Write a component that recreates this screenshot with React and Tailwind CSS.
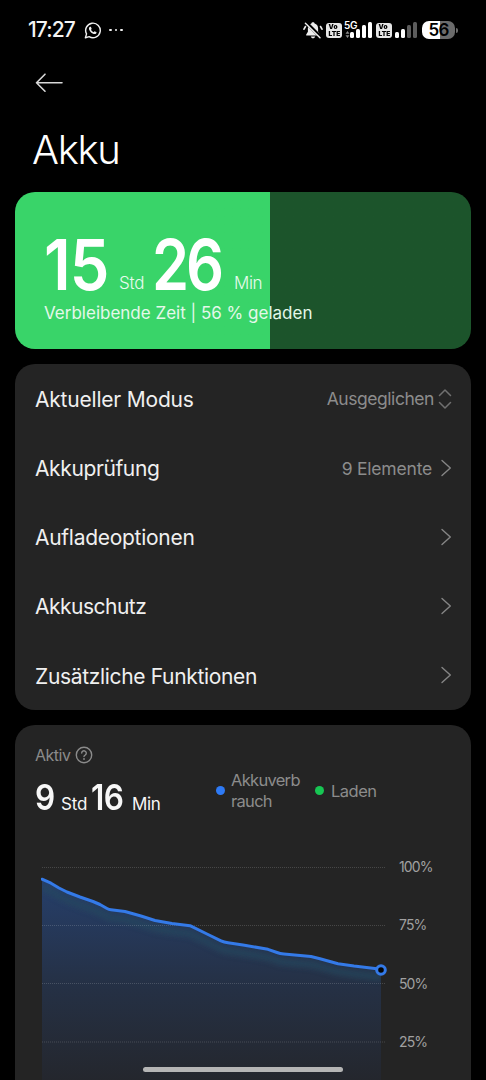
const menuItems = [
    { label: "Aktueller Modus", value: "Ausgeglichen", type: "select", spacing: "tracking-[-0.2px]" },
    { label: "Akkuprüfung", value: "9 Elemente", spacing: "tracking-[-0.38px]" },
    { label: "Aufladeoptionen", spacing: "tracking-[-0.28px]" },
    { label: "Akkuschutz", spacing: "tracking-[-0.5px]" },
    { label: "Zusätzliche Funktionen", spacing: "tracking-[-0.33px]" },
];

const gridLevels = ["100%", "75%", "50%", "25%"];

// Battery level curve, origin is the top left corner of the plot
const curve =
    "M1 19.2 L10 23.2 L18 28 L26 32 L39 37 L52 41.500 L59 44.500 L66 48.500 Q68 49.600 70 49.800 L84 51.500 L100 56 L114 60.500 L131 63.500 L149 65.700 L166 74 L180 80.800 Q183 82.200 187 82.700 L202 85 L227 89.300 L236 92.500 Q239 93.800 243 94 L270 96.500 L279 98.700 L297 103.700 L313 106 L336 108.700 L340 110";

function BellOffIcon() {
    return (
        <svg width="20" height="19" viewBox="0 0 20 19" fill="none">
            <path d="M10 1.200c.9 0 1.500.5 1.600 1.300 2.300.7 3.500 2.500 3.500 5v3.300l1.700 2.600v1H3.200v-1l1.700-2.600V7.500c0-2.500 1.200-4.300 3.500-5 .1-.8.700-1.300 1.600-1.300Z" fill="#ececec" />
            <path d="M7.800 15.400h4.400c-.3 1.200-1.100 1.800-2.200 1.800s-1.900-.6-2.200-1.800Z" fill="#ececec" />
            <path d="M2.400 5.600 1 8.200M17.600 5.600 19 8.200" stroke="#ececec" strokeWidth="1.700" strokeLinecap="round" />
            <path d="m3.300 1.700 14.500 14.500" stroke="#000" strokeWidth="3.400" />
            <path d="m2.400 2.200 14.600 14.600" stroke="#ececec" strokeWidth="1.500" strokeLinecap="round" />
        </svg>
    );
}

function WhatsAppIcon() {
    return (
        <svg width="17" height="17" viewBox="0 0 24 24" fill="none" stroke="#f0f0f0">
            <path d="M2 22.200 3.600 16.800A10.300 10.300 0 1 1 7.300 20.700Z" strokeWidth="2" strokeLinejoin="round" />
            <path d="M8.600 6.600c-.4 0-1.600 1-1.600 2.500 0 3.300 4.200 7.900 8.200 7.900 1.500 0 2.500-1.100 2.500-2.200 0-.5-2.500-1.700-2.900-1.600-.5.100-.9 1.200-1.400 1.200-.9-.2-3.200-2.300-3.400-3.300 0-.4.8-.9.800-1.500-.2-.7-.9-2.500-1.300-2.900Z" fill="#f0f0f0" stroke="none" />
        </svg>
    );
}

function VolteBadge() {
    return (
        <div className="flex h-[15px] w-4 flex-col items-center justify-center rounded-[3px] bg-[#e6e6e6] text-[6px] leading-[7px] font-black text-black">
            <span className="-ml-0.5 scale-x-110">Vo</span>
            <span className="scale-x-110">LTE</span>
        </div>
    );
}

function SignalBars({ active }) {
    const heights = ["h-[6px]", "h-[9px]", "h-[13px]", "h-[16px]"];
    return (
        <div className="flex items-end gap-[2px]">
            {heights.map((height, i) => (
                <div key={height} className={`w-1 rounded-[1.5px] ${height} ${i < active ? "bg-white" : "bg-[#5c5c5c]"}`} />
            ))}
        </div>
    );
}

function StatusBar() {
    return (
        <div className="flex h-[60px] items-center pr-[28px] pl-[28px]">
            <span className="w-[56px] text-[21px] font-medium tracking-[-0.9px] text-[#f4f4f4]">17:27</span>
            <WhatsAppIcon />
            <div className="ml-[8px] flex gap-[3px]">
                <i className="size-[2.500px] rounded-full bg-[#f0f0f0]" />
                <i className="size-[2.500px] rounded-full bg-[#f0f0f0]" />
                <i className="size-[2.500px] rounded-full bg-[#f0f0f0]" />
            </div>
            <div className="ml-auto flex items-center">
                <BellOffIcon />
                <div className="ml-[3px]"><VolteBadge /></div>
                <div className="relative ml-[5px] pl-[3px]">
                    <SignalBars active={4} />
                    <span className="absolute -top-px left-[-3px] bg-black text-[10px] leading-[8px] font-semibold tracking-[-0.3px] text-white">5G</span>
                    <svg className="absolute bottom-0 left-[-2px]" width="5" height="7" viewBox="0 0 5 7">
                        <path d="M2.500 0 4.500 2.700H.5ZM2.500 7 .5 4.300h4Z" fill="#8b8b8b" />
                    </svg>
                </div>
                <div className="ml-[4px]"><VolteBadge /></div>
                <div className="ml-[3px]"><SignalBars active={2} /></div>
                <div className="ml-[5px] flex h-[18px] w-[33px] items-center justify-center rounded-[7px] bg-linear-to-r from-white from-56% to-[#6b6b6b] to-56% text-[17px] leading-none font-semibold tracking-[-0.8px] text-black">
                    56
                </div>
                <div className="ml-px h-[5px] w-[2px] rounded-r-full bg-[#6b6b6b]" />
            </div>
        </div>
    );
}

function ChargeCard() {
    return (
        <div className="h-[157px] rounded-[20px] bg-linear-to-r from-[#39d469] from-56% to-[#1c542b] to-56% pl-[29px] text-white">
            <div className="flex h-[109px] items-end leading-[36px] whitespace-nowrap">
                <span className="w-[75px] origin-left scale-x-90 text-[70px] leading-[72px] font-semibold tracking-[-1px]">15</span>
                <span className="w-[33px] text-[17px] font-light tracking-[-0.2px] text-[#e8fbee]">Std</span>
                <span className="w-[82px] origin-left scale-x-85 text-[70px] leading-[72px] font-semibold tracking-[-3.500px]">26</span>
                <span className="text-[17px] font-light tracking-[-0.4px] text-[#e8fbee]">Min</span>
            </div>
            <div className="text-[17px] leading-[25px] whitespace-nowrap text-[#e4f8ea]">Verbleibende Zeit | 56 % geladen</div>
        </div>
    );
}

function Chevron() {
    return (
        <svg width="12" height="18" viewBox="0 0 12 18" fill="none">
            <path d="m2 1.500 8.300 7.500L2 16.500" stroke="#858585" strokeWidth="1.400" strokeLinecap="round" strokeLinejoin="round" />
        </svg>
    );
}

function SelectArrows() {
    return (
        <svg width="14" height="20" viewBox="0 0 14 20" fill="none">
            <path d="M1.500 6.500 7 1l5.500 5.500M1.500 13.500 7 19l5.500-5.500" stroke="#707070" strokeWidth="1.500" strokeLinecap="round" strokeLinejoin="round" />
        </svg>
    );
}

function MenuRow({ item }) {
    return (
        <div className="flex h-[69.200px] items-center pr-[19px] pl-5">
            <span className={`pt-[2px] text-[21px] text-[#f0f0f0] ${item.spacing}`}>{item.label}</span>
            <span className={`ml-auto pt-[2px] text-[17.500px] text-[#8c8c8c] ${item.type === "select" ? "mr-[4px] tracking-[-0.45px]" : "mr-[8px] tracking-[-0.2px]"}`}>{item.value}</span>
            {item.type === "select" ? <SelectArrows /> : <Chevron />}
        </div>
    );
}

function UsageChart() {
    return (
        <div className="flex pl-[26px]">
            <svg width="352" height="225" viewBox="0 0 352 225" fill="none">
                <defs>
                    <linearGradient id="area" x1="0" y1="19" x2="0" y2="225" gradientUnits="userSpaceOnUse">
                        <stop offset="0" stopColor="#263f6b" />
                        <stop offset="0.500" stopColor="#253146" />
                        <stop offset="1" stopColor="#24262c" />
                    </linearGradient>
                    <clipPath id="areaClip">
                        <path d={`${curve} V225 H1 Z`} />
                    </clipPath>
                    <filter id="glow" x="-5%" y="-30%" width="110%" height="180%">
                        <feGaussianBlur stdDeviation="2.500" />
                    </filter>
                </defs>
                <path d={`${curve} V225 H1 Z`} fill="url(#area)" />
                <g clipPath="url(#areaClip)">
                    <path d={curve} transform="translate(0 8)" stroke="#28485f" strokeWidth="8" opacity="0.600" filter="url(#glow)" />
                </g>
                {[7.5, 65.5, 123.5, 182].map((y) => (
                    <path key={y} d={`M1 ${y}H345`} stroke="#fff" strokeOpacity="0.160" strokeDasharray="1 1" />
                ))}
                <path d={curve} stroke="#347ae8" strokeWidth="3" strokeLinecap="round" strokeLinejoin="round" />
                <circle cx="340" cy="110" r="4.300" fill="#050505" stroke="#347ae8" strokeWidth="3" />
            </svg>
            <div className="-mt-[3px] ml-[6px] text-[14px] tracking-[-0.9px] text-[#a0a0a0]">
                {gridLevels.map((level) => (
                    <div key={level} className="h-[58.300px] leading-5">{level}</div>
                ))}
            </div>
        </div>
    );
}

function UsageCard() {
    return (
        <div className="h-[400px] rounded-t-[20px] bg-[#242424] pt-[18px]">
            <div className="flex h-[117px] pl-5">
                <div className="w-[181px]">
                    <div className="flex h-6 items-center text-[16px] text-[#8b8b8b]">
                        <span className="w-[40px] tracking-[-0.5px]">Aktiv</span>
                        <svg width="18" height="18" viewBox="0 0 18 18" fill="none" stroke="#8b8b8b" strokeLinecap="round">
                            <circle cx="9" cy="9" r="7.700" strokeWidth="1.400" />
                            <path d="M6.700 7.100a2.300 2.300 0 1 1 3.700 1.800C9.500 9.500 9 9.800 9 10.600" strokeWidth="1.400" />
                            <circle cx="9" cy="13" r=".9" fill="#8b8b8b" stroke="none" />
                        </svg>
                    </div>
                    <div className="mt-[10px] flex items-baseline leading-[40px] whitespace-nowrap text-[#f7f7f7]">
                        <span className="w-[26px] origin-left scale-x-90 text-[35px] font-semibold">9</span>
                        <span className="w-[30px] text-[17px] tracking-[-0.2px]">Std</span>
                        <span className="w-[41px] origin-left scale-x-90 text-[35px] font-semibold tracking-[-0.5px]">16</span>
                        <span className="text-[17px] tracking-[-0.4px]">Min</span>
                    </div>
                </div>
                <div className="mt-[27px] flex h-[42px] items-center text-[16.500px] leading-[21px] tracking-[-0.7px] text-[#8c8c8c]">
                    <i className="mb-[2px] size-[9px] rounded-full bg-[#2e7af5]" />
                    <span className="ml-[6px] w-[72px]">Akkuverb<br />rauch</span>
                    <i className="mb-[2px] ml-[12px] size-[9px] rounded-full bg-[#17c653]" />
                    <span className="ml-[7px] tracking-[-0.5px]">Laden</span>
                </div>
            </div>
            <UsageChart />
        </div>
    );
}

export default function App() {
    return (
        <div className="relative h-[1080px] w-[486px] overflow-hidden bg-black font-['Inter',sans-serif]">
            <StatusBar />
            <header className="h-[132px] pl-[33px] text-white">
                <svg className="ml-[2px]" width="28" height="46" viewBox="0 0 28 46" fill="none">
                    <path d="M27 22.700H1.500M10 14.200 1.500 22.700 10 31.200" stroke="#d8d8d8" strokeWidth="1.600" strokeLinecap="round" strokeLinejoin="round" />
                </svg>
                <h1 className="mt-[20px] -ml-px text-[40px] leading-[48px] font-light tracking-[-1.300px]">Akku</h1>
            </header>
            <main className="flex flex-col gap-[15px] px-[15px]">
                <ChargeCard />
                <div className="h-[346px] rounded-[20px] bg-[#242424]">
                    {menuItems.map((item) => (
                        <MenuRow key={item.label} item={item} />
                    ))}
                </div>
                <UsageCard />
            </main>
            <div className="absolute bottom-[8px] left-[143px] h-[5px] w-[200px] rounded-full bg-[#b5b5b5]" />
        </div>
    );
}
